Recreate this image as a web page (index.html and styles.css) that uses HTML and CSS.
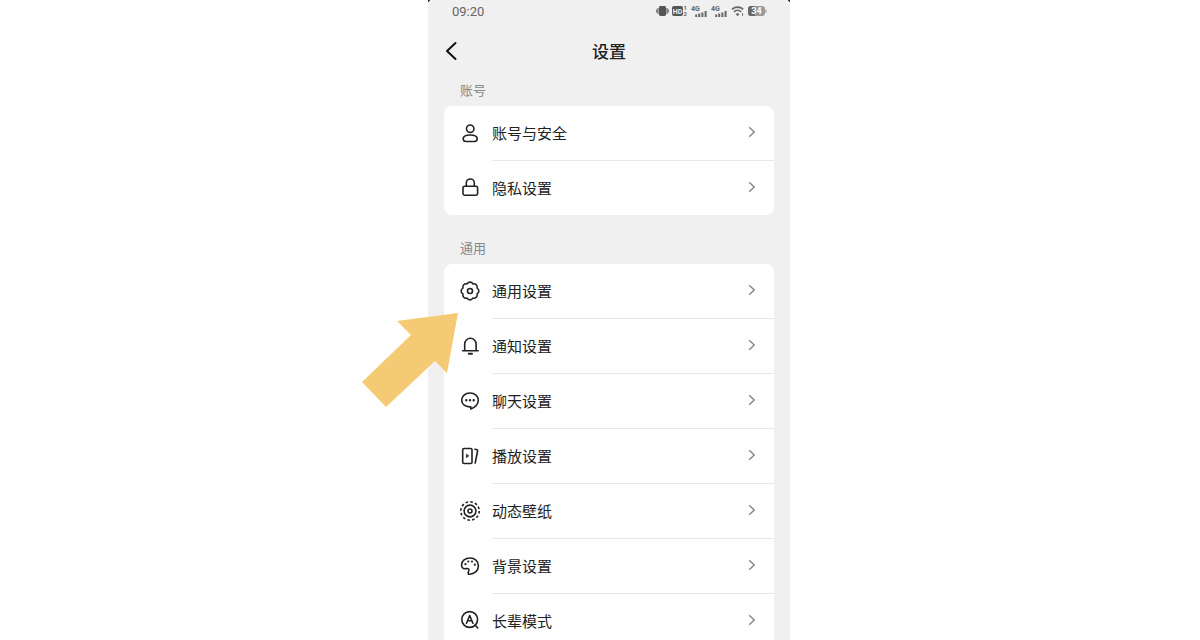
FILE: index.html
```html
<!DOCTYPE html>
<html lang="zh-CN">

<head>
    <meta charset="UTF-8">
    <meta name="viewport" content="width=device-width, initial-scale=1.0">
    <title>设置</title>
    <link rel="stylesheet" href="styles.css">
</head>

<body>

    <!-- Shared chevron for all rows -->
    <svg class="sprite" aria-hidden="true">
        <symbol id="chevron" viewBox="0 0 8 12">
            <path d="M1.2 1.2 6.2 6 1.2 10.8" />
        </symbol>
    </svg>

    <div class="stage">
        <div class="phone">

            <!-- Status Bar -->
            <div class="status-bar">
                <span class="time">09:20</span>
                <div class="status-icons">
                    <svg width="13" height="12" viewBox="0 0 13 12">
                        <rect x="3" y="1" width="7" height="10" rx="1.4" fill="#555" />
                        <path d="M2 3v6M11 3v6M.6 4.6v2.8M12.4 4.6v2.8" stroke="#777" stroke-width="1.3" />
                    </svg>
                    <svg width="16" height="12" viewBox="0 0 16 12">
                        <rect x="0" y="1" width="11" height="10" rx="2" fill="#555" />
                        <text x="5.5" y="8.5" font-size="7" fill="#f0f0f0" text-anchor="middle">HD</text>
                        <text x="11.5" y="5" font-size="6">1</text>
                        <text x="11.5" y="11" font-size="6">2</text>
                    </svg>
                    <svg width="17" height="12" viewBox="0 0 17 12">
                        <text x="0" y="5.5" font-size="7">4G</text>
                        <path d="M5.2 9.5V12M8.2 8.5V12M11.4 7.5V12M14.6 6V12" stroke="#666" stroke-width="2" />
                    </svg>
                    <svg width="17" height="12" viewBox="0 0 17 12">
                        <text x="0" y="5.5" font-size="7">4G</text>
                        <path d="M5.2 9.5V12M8.2 8.5V12M11.4 7.5V12M14.6 6V12" stroke="#666" stroke-width="2" />
                    </svg>
                    <svg width="14" height="12" viewBox="0 0 14 12">
                        <path d="M1 4.4c3.2-3 8-3 11.2 0M3 6.8c2-1.9 5.2-1.9 7.2 0" fill="none" stroke="#666" stroke-width="1.6" />
                        <path d="m6.6 11.2-2-2.300q2-1.500 4 0z" fill="#666" />
                        <path d="M11.500 8v3" stroke="#777" />
                    </svg>
                    <svg width="19" height="12" viewBox="0 0 19 12">
                        <rect x="0" y="1" width="17" height="10" rx="3" fill="#999" />
                        <path d="M3 1h4v10H3a3 3 0 0 1-3-3V4a3 3 0 0 1 3-3z" fill="#666" />
                        <path d="M18 4.500v3" stroke="#999" stroke-width="1.2" />
                        <text x="8.5" y="9.200" font-size="9" fill="#fff" text-anchor="middle">34</text>
                    </svg>
                </div>
            </div>

            <!-- Header -->
            <header class="header">
                <a class="back" href="#" aria-label="返回">
                    <svg width="14" height="20" viewBox="0 0 14 20">
                        <path d="M11.500 2 3 10l8.500 8" />
                    </svg>
                </a>
                <h1>设置</h1>
            </header>

            <section class="group">
                <h2>账号</h2>
                <nav class="card">
                    <a class="row" href="#">
                        <svg class="icon" viewBox="0 0 20 20">
                            <circle cx="10.200" cy="5.700" r="3.700" />
                            <path d="M10.200 12c4.200 0 7 1.300 7 3.800 0 2-1.300 2.700-3 2.700h-8c-1.700 0-3-.7-3-2.700 0-2.500 2.800-3.800 7-3.800z" />
                        </svg>
                        <span class="row-body">账号与安全<svg class="chevron"><use href="#chevron" /></svg></span>
                    </a>
                    <a class="row" href="#">
                        <svg class="icon" viewBox="0 0 20 20">
                            <rect x="3" y="9.200" width="14.600" height="9" rx="1.600" />
                            <path d="M6.300 9.200V6a4 4 0 0 1 8 0v3.200" />
                        </svg>
                        <span class="row-body">隐私设置<svg class="chevron"><use href="#chevron" /></svg></span>
                    </a>
                </nav>
            </section>

            <section class="group">
                <h2>通用</h2>
                <nav class="card">
                    <a class="row" href="#">
                        <svg class="icon" viewBox="0 0 20 20">
                            <path d="M17 7.100a3.200 3.200 0 0 1 0 5.800 3.200 3.200 0 0 1-4.100 4.100 3.200 3.200 0 0 1-5.800 0A3.200 3.200 0 0 1 3 12.900a3.200 3.200 0 0 1 0-5.800A3.200 3.200 0 0 1 7.100 3a3.200 3.200 0 0 1 5.800 0A3.200 3.200 0 0 1 17 7.100z" />
                            <circle cx="10" cy="10" r="2.500" />
                        </svg>
                        <span class="row-body">通用设置<svg class="chevron"><use href="#chevron" /></svg></span>
                    </a>
                    <a class="row" href="#">
                        <svg class="icon" viewBox="0 0 20 20">
                            <path d="M4.700 14.500V8a5.700 5.700 0 0 1 11.400 0v6.500M2.600 14.800h15.600" />
                            <path d="M8.800 17.800h3.200" stroke-width="2" />
                        </svg>
                        <span class="row-body">通知设置<svg class="chevron"><use href="#chevron" /></svg></span>
                    </a>
                    <a class="row" href="#">
                        <svg class="icon" viewBox="0 0 20 20">
                            <path d="M10.800 18v-2.100H9.500C5 15.900 1.700 13 1.700 9.200S5.200 2 10 2s8.300 3.200 8.300 7c0 4.200-3.300 7.300-7.500 9z" />
                            <path d="M6.300 9.200h.01M10 9.200h.01M13.700 9.200h.01" stroke-width="2.400" />
                        </svg>
                        <span class="row-body">聊天设置<svg class="chevron"><use href="#chevron" /></svg></span>
                    </a>
                    <a class="row" href="#">
                        <svg class="icon" viewBox="0 0 20 20">
                            <rect x="2.700" y="2.500" width="9.300" height="15" rx="1.300" />
                            <path d="M6.300 8.300v3.400L8.800 10z" fill="#222" stroke-width=".5" />
                            <path d="M15 3.300l2 .5q.8.300.6 1.200L15.200 17" />
                        </svg>
                        <span class="row-body">播放设置<svg class="chevron"><use href="#chevron" /></svg></span>
                    </a>
                    <a class="row" href="#">
                        <svg class="icon" viewBox="0 0 20 20">
                            <circle cx="10" cy="10" r="9.200" stroke-linecap="butt" stroke-dasharray="2.600 2.217" />
                            <circle cx="10" cy="10" r="5.900" />
                            <circle cx="10" cy="10" r="2" />
                        </svg>
                        <span class="row-body">动态壁纸<svg class="chevron"><use href="#chevron" /></svg></span>
                    </a>
                    <a class="row" href="#">
                        <svg class="icon" viewBox="0 0 20 20">
                            <path d="M8.500 18.200c6 .5 9.900-3.700 9.900-8.300C18.400 5.200 14.700 2 10 2S1.600 5 1.600 8.800c0 2.500 1.500 4 3.400 4 1.500 0 2.700-.8 3.700.2 1.300 1.300-1.700 3.600-.2 5.200z" />
                            <path d="M5.500 8.200h.01M8.300 5.500h.01M12 5.500h.01M14.800 8.700h.01" stroke-width="2.200" />
                        </svg>
                        <span class="row-body">背景设置<svg class="chevron"><use href="#chevron" /></svg></span>
                    </a>
                    <a class="row" href="#">
                        <svg class="icon" viewBox="0 0 20 20">
                            <circle cx="9.700" cy="9.500" r="7.900" />
                            <path d="M6.500 13.200 9.700 5.500l3.200 7.700M7.600 10.700h4.200M15 15l2.800 3" />
                        </svg>
                        <span class="row-body">长辈模式<svg class="chevron"><use href="#chevron" /></svg></span>
                    </a>
                </nav>
            </section>
        </div>

        <!-- Arrow pointing at the general settings row -->
        <svg class="arrow" viewBox="0 0 96 94" aria-hidden="true">
            <path d="M96 0 35 8 49 22 0 69 24 94 73 48 85 60z" fill="#f5ca74" />
        </svg>
    </div>

</body>

</html>
```
FILE: styles.css
```css
* {
    box-sizing: border-box;
}

body {
    margin: 0;
    padding-left: 18px;
    background: #fff;
    color: #222;
    font-family: "Noto Sans CJK SC", sans-serif;
}

.sprite {
    position: absolute;
    width: 0;
    height: 0;
}

.stage {
    position: relative;
    max-width: 362px;
    margin: 0 auto;
}

.phone {
    height: 100vh;
    padding: 0 16px;
    overflow: hidden;
    background:
        linear-gradient(135deg, #333 2px, transparent 2px),
        linear-gradient(225deg, #333 2px, #f0f0f0 2px);
}

/* Status Bar */
.status-bar {
    display: flex;
    justify-content: space-between;
    align-items: center;
    height: 22px;
    padding: 0 7px 0 8px;
    font-family: Roboto, sans-serif;
    font-size: 13px;
    color: #666;
}

.status-icons {
    display: flex;
    gap: 3px;
}

.status-icons text {
    font-family: Roboto, sans-serif;
    font-weight: bold;
}

.status-icons text:not([fill]) {
    fill: #666;
}

/* Header */
.header {
    display: grid;
    grid-template-columns: 20px 1fr 20px;
    align-items: center;
    height: 58px;
}

.header h1 {
    margin: 0;
    font-size: 17px;
    font-weight: 500;
    line-height: 24px;
    text-align: center;
}

.back {
    display: flex;
}

.back path {
    fill: none;
    stroke: #111;
    stroke-width: 2;
    stroke-linecap: round;
    stroke-linejoin: round;
}

/* Setting Groups */
.group {
    margin-bottom: 23px;
}

.group h2 {
    margin: 0 0 6px;
    padding: 0 16px;
    font-size: 13px;
    font-weight: 400;
    line-height: 20px;
    color: #888;
}

.card {
    background: #fff;
    border-radius: 8px;
}

.row {
    display: flex;
    align-items: center;
    gap: 12px;
    padding-left: 16px;
    color: #222;
    font-size: 15px;
    text-decoration: none;
}

.row-body {
    display: flex;
    flex: 1;
    justify-content: space-between;
    align-items: center;
    height: 55px;
    padding: 0 18px 2px 0;
    border-bottom: 1px solid #e8e8e8;
}

.row:last-child .row-body {
    height: 54px;
    border-bottom: none;
}

.icon {
    width: 20px;
    height: 20px;
    margin-bottom: 2px;
    fill: none;
    stroke: #222;
    stroke-width: 1.6;
    stroke-linecap: round;
    stroke-linejoin: round;
}

.chevron {
    width: 8px;
    height: 12px;
    fill: none;
    stroke: #888;
    stroke-width: 1.5;
}

/* Arrow over the phone */
.arrow {
    position: absolute;
    top: 313px;
    left: -66px;
    width: 96px;
    height: 94px;
}
```
